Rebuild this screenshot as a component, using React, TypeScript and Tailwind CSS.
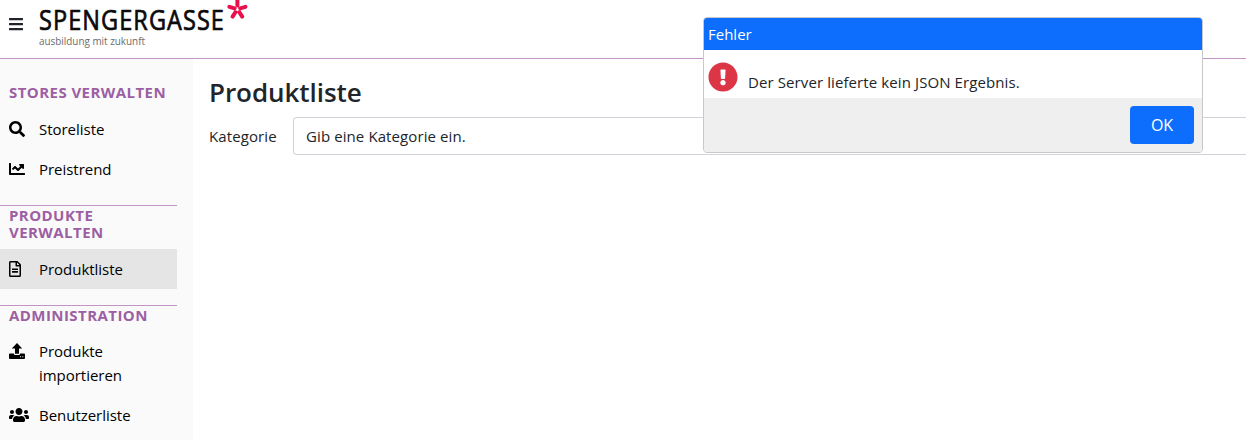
import React from "react";
import {
  FaBars,
  FaSearch,
  FaChartLine,
  FaRegFileAlt,
  FaUsers,
  FaExclamationCircle,
} from "react-icons/fa";

function UploadIcon() {
  return (
    <svg width="16" height="16" viewBox="0 0 16 16" fill="currentColor" className="block">
      <path d="M8 0 13.2 5.6H10v5.2H6V5.6H2.8z" />
      <path
        fillRule="evenodd"
        d="M1 10.5h4v.6q0 1 1 1h4q1 0 1-1v-.6h4q1 0 1 1v3.5q0 1-1 1H1q-1 0-1-1v-3.5q0-1 1-1zM11.1 13.3v1h1v-1zM13.3 13.3v1h1v-1z"
      />
    </svg>
  );
}

function Logo() {
  return (
    <svg width="210" height="50" viewBox="0 0 210 50" className="block" aria-label="Spengergasse">
      <text
        x="0"
        y="29.8"
        fontSize="26.5"
        fill="#0b0b0b"
        stroke="#0b0b0b"
        strokeWidth="0.7"
        strokeLinejoin="round"
        letterSpacing="1.2"
        textLength="186"
        lengthAdjust="spacingAndGlyphs"
        className="font-['Open_Sans',sans-serif]"
      >
        SPENGERGASSE
      </text>
      <text
        x="0"
        y="45"
        fontSize="11"
        fill="#6b6b6b"
        textLength="106"
        lengthAdjust="spacingAndGlyphs"
        className="font-['Open_Sans',sans-serif]"
      >
        ausbildung mit zukunft
      </text>
      <g stroke="#e8114b" strokeWidth="4" strokeLinecap="round">
        <path d="M198.4 0v5.5M190.4 6.8l5.2 1.5M206.4 6.8l-5.2 1.5M193.6 16.6l2.8-4.4M203.2 16.6l-2.8-4.4" />
      </g>
    </svg>
  );
}

interface SectionProps {
  title: string;
  first?: boolean;
  compact?: boolean;
  children: React.ReactNode;
}

function Section({ title, first, compact, children }: SectionProps) {
  return (
    <section className={first ? "mr-4 pt-[25px]" : "mr-4 mt-4 border-t border-[#c493c6] pt-px"}>
      <h2 className="pl-[9px] text-[15px] leading-[17px] font-bold tracking-[0.44px] text-[#9c5fa3] uppercase">
        {title}
      </h2>
      <div className={compact ? "pt-[7px]" : "pt-2"}>{children}</div>
    </section>
  );
}

function Item({ icon, label, active }: { icon: React.ReactNode; label: string; active?: boolean }) {
  return (
    <a className={active ? "flex bg-[#e5e5e5] py-2 pl-[9px] text-black" : "flex py-2 pl-[9px] text-black"}>
      <span className="flex h-6 w-[30px] shrink-0 items-center text-base">{icon}</span>
      <span className="text-[15px] leading-6 tracking-[-0.03px]">{label}</span>
    </a>
  );
}

export default function App() {
  return (
    <div className="relative flex h-[440px] w-full flex-col overflow-hidden bg-white font-['Open_Sans','Noto_Sans',sans-serif] text-[15px] text-[#212529]">
      <header className="flex h-[59px] shrink-0 border-b border-[#c493c6] pl-[9px]">
        <FaBars className="mt-4 mr-[16px] w-[14px] shrink-0 text-base" />
        <Logo />
      </header>
      <div className="flex min-h-0 flex-1">
        <nav className="w-[193px] shrink-0 bg-[#fafafa]">
          <Section title="Stores verwalten" first>
            <Item icon={<FaSearch />} label="Storeliste" />
            <Item icon={<FaChartLine />} label="Preistrend" />
          </Section>
          <Section title="Produkte verwalten">
            <Item icon={<FaRegFileAlt className="w-3" />} label="Produktliste" active />
          </Section>
          <Section title="Administration" compact>
            <Item icon={<UploadIcon />} label="Produkte importieren" />
            <Item icon={<FaUsers className="w-5" />} label="Benutzerliste" />
          </Section>
        </nav>
        <main className="min-w-0 flex-1 pt-4 pl-4">
          <h1 className="mb-2 text-[26px] leading-[34px] font-semibold tracking-[-0.05px]">Produktliste</h1>
          <div className="flex items-center tracking-[0.1px]">
            <label className="w-[84px] shrink-0">Kategorie</label>
            <div className="flex h-[38px] flex-1 items-center rounded-l border border-r-0 border-[#ced4da] px-3">
              Gib eine Kategorie ein.
            </div>
          </div>
        </main>
      </div>
      <div
        role="dialog"
        className="absolute top-[17px] left-[703px] flex h-[136px] w-[500px] flex-col overflow-hidden rounded border border-[#c8c8c8] bg-white"
      >
        <div className="h-8 shrink-0 bg-[#0d6efd] px-1 leading-8 text-white">Fehler</div>
        <div className="flex h-12 shrink-0 pl-1">
          <FaExclamationCircle className="mt-3 size-[30px] text-[#dc3545]" />
          <p className="mt-5 ml-[10px] leading-6 tracking-[0.1px]">Der Server lieferte kein JSON Ergebnis.</p>
        </div>
        <div className="flex flex-1 justify-end bg-[#efefef] pt-2 pr-2">
          <button className="h-[38px] w-16 rounded bg-[#0d6efd] text-base text-white">OK</button>
        </div>
      </div>
    </div>
  );
}
